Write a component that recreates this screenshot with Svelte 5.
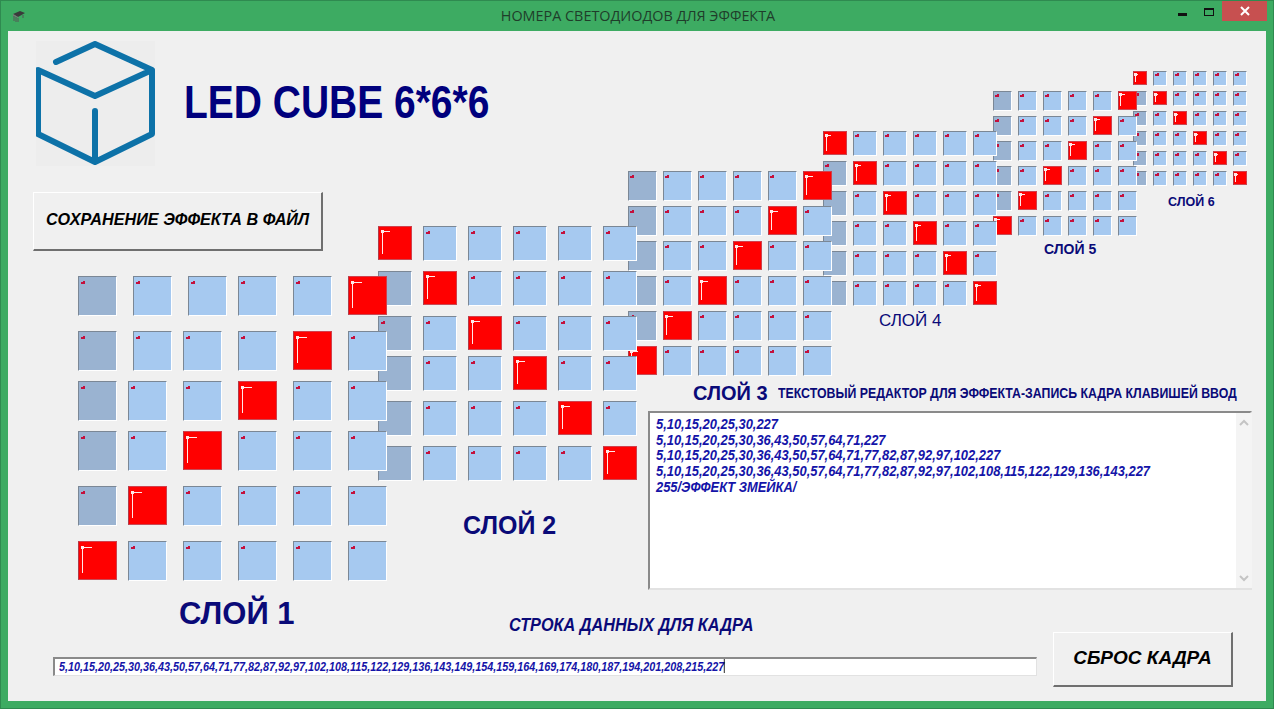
<script>
  const dataLine = '5,10,15,20,25,30,36,43,50,57,64,71,77,82,87,92,97,102,108,115,122,129,136,143,149,154,159,164,169,174,180,187,194,201,208,215,227';
  const editorLines = [
    '5,10,15,20,25,30,227',
    '5,10,15,20,25,30,36,43,50,57,64,71,227',
    '5,10,15,20,25,30,36,43,50,57,64,71,77,82,87,92,97,102,227',
    '5,10,15,20,25,30,36,43,50,57,64,71,77,82,87,92,97,102,108,115,122,129,136,143,227',
    '255/ЭФФЕКТ ЗМЕЙКА/'
  ];

  const steps = (start, pitch) => [0, 1, 2, 3, 4, 5].map((i) => start + i * pitch);

  // the form's led buttons are not on a regular grid, so each layer keeps its own offsets
  const layers = [
    { n: 6, size: 14, diag: 'down', ys: steps(71, 20), xs: Array(6).fill(steps(1133, 20)) },
    { n: 5, size: 19, diag: 'up', ys: steps(91, 25), xs: Array(6).fill(steps(993, 25)) },
    { n: 4, size: 24, diag: 'down', ys: steps(131, 30), xs: Array(6).fill(steps(823, 30)) },
    { n: 3, size: 29, diag: 'up', ys: steps(171, 35), xs: Array(6).fill(steps(628, 35)) },
    { n: 2, size: 34, diag: 'down', ys: [226, 271, 316, 356, 401, 446], xs: Array(6).fill(steps(378, 45)) },
    {
      n: 1,
      size: 39,
      diag: 'up',
      ys: [276, 331, 381, 431, 486, 541],
      xs: [
        [78, 133, 188, 238, 293, 348],
        [78, 133, 183, 238, 293, 348],
        [78, 128, 183, 238, 293, 348],
        [78, 128, 183, 238, 293, 348],
        [78, 128, 183, 238, 293, 348],
        [78, 128, 183, 238, 293, 348]
      ]
    }
  ];

  const tiles = layers.flatMap((layer) =>
    layer.ys.flatMap((y, row) =>
      layer.xs[row].map((x, col) => ({
        x,
        y,
        size: layer.size,
        on: layer.diag === 'down' ? row === col : row + col === 5,
        first: col === 0
      }))
    )
  );

  const labels = [
    { text: 'СЛОЙ 6', x: 1168, y: 195, size: 12.5, weight: 'bold' },
    { text: 'СЛОЙ 5', x: 1044, y: 241, size: 14, weight: 'bold' },
    { text: 'СЛОЙ 4', x: 879, y: 311, size: 17, weight: 'normal' },
    { text: 'СЛОЙ 3', x: 693, y: 381, size: 20, weight: 'bold' },
    { text: 'СЛОЙ 2', x: 463, y: 510, size: 25, weight: 'bold' },
    { text: 'СЛОЙ 1', x: 179, y: 595, size: 31, weight: 'bold' }
  ];
</script>

<div class="window">
  <div class="titlebar">
    <svg class="app-icon" width="16" height="14" viewBox="0 0 16 14">
      <path d="M3 5 L10 2 L15 4 L8 8 Z" fill="#3a3a3a" />
      <path d="M3 5 L8 8 L8 9 L3 7 Z" fill="#777" />
      <path d="M4 7 V12 M6 8 V13 M8 9 V13 M13 6 V9" stroke="#555" stroke-width="1" fill="none" />
    </svg>
    <span class="title">НОМЕРА СВЕТОДИОДОВ ДЛЯ ЭФФЕКТА</span>
    <div class="controls">
      <span class="min"></span>
      <span class="max"></span>
      <span class="close">
        <svg width="10" height="10" viewBox="0 0 10 10">
          <path d="M1 1 L9 9 M9 1 L1 9" stroke="#fff" stroke-width="2" />
        </svg>
      </span>
    </div>
  </div>

  <div class="client">
    <div class="head">
      <div class="logo">
        <svg width="119" height="125" viewBox="0 0 119 125">
          <path
            d="M20 21 L59 3 L116 29 V93 L59 121 L2 93 V29 L59 55 L116 29 M59 70 V121"
            fill="none"
            stroke="#0d72a8"
            stroke-width="6"
            stroke-linecap="round"
            stroke-linejoin="round"
          />
        </svg>
      </div>
      <h1>LED CUBE 6*6*6</h1>
    </div>

    <button class="save">СОХРАНЕНИЕ ЭФФЕКТА В ФАЙЛ</button>

    <section class="editor">
      <div class="editor-label">ТЕКСТОВЫЙ РЕДАКТОР ДЛЯ ЭФФЕКТА-ЗАПИСЬ КАДРА КЛАВИШЕЙ ВВОД</div>
      <div class="editor-box">
        <div class="editor-text">
          {#each editorLines as line}
            <div>{line}</div>
          {/each}
        </div>
        <div class="scrollbar">
          <svg width="10" height="7" viewBox="0 0 10 7"><path d="M1 6 L5 2 L9 6" fill="none" stroke="#c4c4c4" stroke-width="2" /></svg>
          <svg width="10" height="7" viewBox="0 0 10 7"><path d="M1 1 L5 5 L9 1" fill="none" stroke="#c4c4c4" stroke-width="2" /></svg>
        </div>
      </div>
    </section>

    <div class="bottom">
      <div class="data">
        <div class="data-label">СТРОКА ДАННЫХ ДЛЯ КАДРА</div>
        <div class="data-input"><span class="data-text">{dataLine}<span class="caret"></span></span></div>
      </div>
      <button class="reset">СБРОС КАДРА</button>
    </div>
  </div>

  <div class="board">
    {#each tiles as t}
      <div
        class="tile"
        class:on={t.on}
        class:first={t.first}
        style="left:{t.x}px;top:{t.y}px;width:{t.size}px;height:{t.on ? t.size : t.size + 1}px"
      >
        {#if t.on}
          <i class="glint-h"></i>
          <i class="glint-v"></i>
        {:else}
          <i class="mark"></i>
        {/if}
      </div>
    {/each}
    {#each labels as l}
      <div class="layer-label" style="left:{l.x}px;top:{l.y}px;font-size:{l.size}px;font-weight:{l.weight}">{l.text}</div>
    {/each}
  </div>
</div>

<style>
  :global(body) {
    margin: 0;
    background: #fff;
  }

  .window {
    position: relative;
    width: 1274px;
    height: 709px;
    box-sizing: border-box;
    background: #3dab62;
    border: 1px solid #2f8a50;
    display: flex;
    flex-direction: column;
    overflow: hidden;
    font-family: 'Liberation Sans', Arial, sans-serif;
  }

  .titlebar {
    position: relative;
    height: 30px;
    flex: none;
    display: flex;
    align-items: center;
    justify-content: center;
  }

  .app-icon {
    position: absolute;
    left: 9px;
    top: 8px;
  }

  .title {
    font-family: 'Open Sans', sans-serif;
    font-size: 14.4px;
    color: #1f3d2a;
    margin: 0 0 2px 2px;
  }

  .controls {
    position: absolute;
    right: 6px;
    top: 0;
    display: flex;
    align-items: flex-start;
  }

  .min {
    width: 9px;
    height: 3px;
    background: #111;
    margin: 12px 17px 0 0;
  }

  .max {
    width: 8px;
    height: 5px;
    border: 1px solid #111;
    border-top-width: 2px;
    margin: 7px 8px 0 0;
  }

  .close {
    width: 45px;
    height: 20px;
    background: #c75050;
    display: flex;
    align-items: center;
    justify-content: center;
  }

  .client {
    width: 1258px;
    height: 670px;
    margin-left: 7px;
    background: #f0f0f0;
    box-sizing: border-box;
    padding: 10px 0 0 25px;
    display: flex;
    flex-direction: column;
    align-items: flex-start;
  }

  .head {
    display: flex;
    align-items: center;
    gap: 29px;
    margin-left: 3px;
  }

  .logo {
    width: 119px;
    height: 125px;
    background: #ededed;
  }

  .logo svg {
    display: block;
  }

  h1 {
    margin: 0 0 4px;
    font-size: 47px;
    font-weight: bold;
    color: #00007d;
    white-space: nowrap;
    transform: scaleX(0.829);
    transform-origin: left;
  }

  button {
    box-sizing: border-box;
    padding: 0;
    background: #f0f0f0;
    border: 1px solid;
    border-color: #fff #6f6f6f #6f6f6f #fff;
    border-right-width: 2px;
    border-bottom-width: 2px;
    font-family: 'Liberation Sans', Arial, sans-serif;
    font-style: italic;
    font-weight: bold;
    color: #000;
  }

  .save {
    width: 290px;
    height: 59px;
    margin-top: 26px;
    padding-bottom: 3px;
    font-size: 16.2px;
  }

  .editor {
    margin: 134px 0 0 615px;
    width: 604px;
  }

  .editor-label {
    height: 16px;
    margin-bottom: 10px;
    margin-left: 130px;
    font-size: 14px;
    line-height: 16px;
    font-weight: bold;
    color: #0a0a78;
    white-space: nowrap;
    transform: scaleX(0.88);
    transform-origin: left;
  }

  .editor-box {
    display: flex;
    box-sizing: border-box;
    height: 179px;
    background: #fff;
    border: 2px solid;
    border-color: #8a8a8a #e2e2e2 #e2e2e2 #8a8a8a;
  }

  .editor-text {
    flex: 1;
    margin: 3px 6px;
    font-size: 15px;
    line-height: 15.7px;
    font-style: italic;
    font-weight: bold;
    color: #1414a8;
    white-space: nowrap;
    transform: scaleX(0.86);
    transform-origin: left;
  }

  .scrollbar {
    width: 16px;
    flex: none;
    background: #f4f4f4;
    display: flex;
    flex-direction: column;
    justify-content: space-between;
    align-items: center;
    padding: 6px 0;
    box-sizing: border-box;
  }

  .bottom {
    display: flex;
    align-items: flex-start;
    margin: 26px 0 0 20px;
    gap: 16px;
  }

  .data {
    width: 984px;
  }

  .data-label {
    height: 18px;
    margin-bottom: 23px;
    margin-left: 456px;
    font-size: 18px;
    line-height: 18px;
    font-style: italic;
    font-weight: bold;
    color: #0a0a78;
    white-space: nowrap;
    transform: scaleX(0.904);
    transform-origin: left;
  }

  .data-input {
    box-sizing: border-box;
    height: 19px;
    padding-left: 4px;
    background: #fff;
    border: 2px solid;
    border-color: #8a8a8a #e2e2e2 #e2e2e2 #8a8a8a;
    border-right-width: 1px;
    border-bottom-width: 1px;
    font-size: 13px;
    line-height: 15px;
    font-style: italic;
    font-weight: bold;
    color: #1414a8;
    white-space: nowrap;
  }

  .data-text {
    display: inline-block;
    transform: scaleX(0.83);
    transform-origin: left;
  }

  .caret {
    display: inline-block;
    width: 1px;
    height: 14px;
    background: #000;
    vertical-align: top;
  }

  .reset {
    width: 180px;
    height: 55px;
    margin-top: 16px;
    padding-bottom: 2px;
    font-size: 19px;
  }

  .board {
    position: absolute;
    inset: -1px;
    pointer-events: none;
  }

  .tile {
    position: absolute;
    box-sizing: border-box;
    background: #a6c9f0;
    border: 1px solid;
    border-color: #7b8795 #fff #fff #7b8795;
  }

  .tile.first {
    background: #9ab3d1;
  }

  .tile.on {
    background: #f00;
    border-color: #d0404c;
    border-left-color: #b03a48;
    border-bottom-color: #c84a56;
  }

  .mark {
    position: absolute;
    left: 5%;
    top: 14%;
    width: 4px;
    height: 2px;
    background: #c4103c;
  }

  .mark::before {
    content: '';
    position: absolute;
    right: 0;
    top: -1px;
    width: 2px;
    height: 1px;
    background: #c4103c;
  }

  .glint-h {
    position: absolute;
    left: 6%;
    top: 13%;
    width: 28%;
    height: 1px;
    background: #ffe8e8;
  }

  .glint-v {
    position: absolute;
    left: 8%;
    top: 13%;
    width: 1px;
    height: 72%;
    background: #ffe8e8;
  }

  .glint-v::before {
    content: '';
    position: absolute;
    left: -1px;
    top: -1px;
    width: 3px;
    height: 3px;
    background: #ffe8e8;
  }

  .layer-label {
    position: absolute;
    color: #0a0a78;
    white-space: nowrap;
    line-height: 1.2;
  }
</style>
